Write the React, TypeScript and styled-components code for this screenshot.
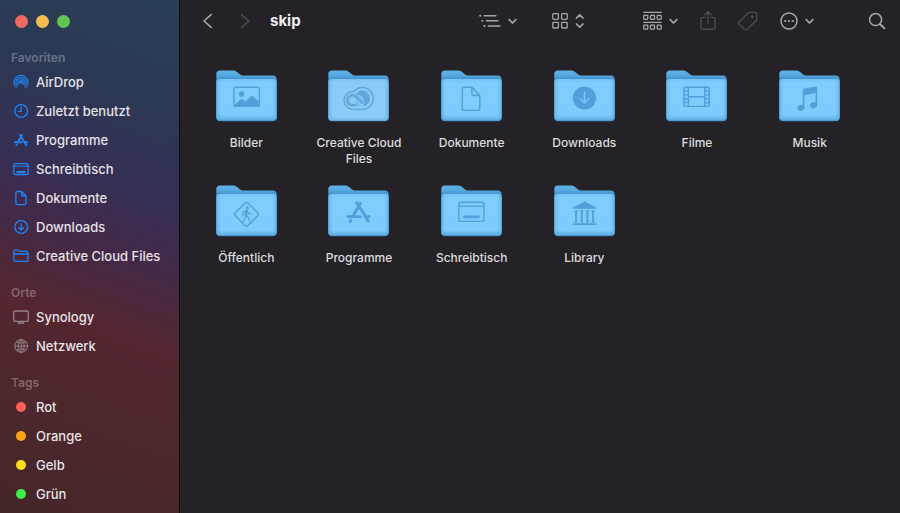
import React from "react";
import styled, { createGlobalStyle } from "styled-components";

const GlobalStyle = createGlobalStyle`
  * { box-sizing: border-box; }
  body { margin: 0; background: #242227; }
  button { border: 0; padding: 0; background: none; color: inherit; font: inherit; }
  svg { display: block; flex: none; }
`;

const Window = styled.div`
  display: flex;
  min-height: 100vh;
  font-family: Inter, "Liberation Sans", sans-serif;
  color: #e4e1e5;
  background: #242227;
`;

const Sidebar = styled.aside`
  flex: none;
  width: 180px;
  border-right: 1px solid #0d0c13;
  background: linear-gradient(
    200deg,
    #283f55 0%,
    #2c3854 20%,
    #352f54 36%,
    #412a4a 46%,
    #54262f 62%,
    #4e272c 74%,
    #432729 100%
  );
`;

const TrafficLights = styled.div`
  display: flex;
  gap: 8px;
  padding: 15px 15px 19px;
`;

const Light = styled.button<{ $color: string }>`
  width: 13px;
  height: 13px;
  border-radius: 50%;
  background: ${(p) => p.$color};
`;

const Section = styled.section`
  margin-bottom: 12px;

  &:last-child {
    margin-bottom: 0;
  }
`;

const SectionTitle = styled.h2`
  margin: 0;
  padding: 2px 0 0 11px;
  font-size: 12px;
  line-height: 18px;
  font-weight: 600;
  color: rgba(255, 255, 255, 0.3);
`;

const List = styled.ul`
  margin: 0;
  padding: 0;
  list-style: none;
`;

const SidebarLink = styled.a<{ $muted?: boolean }>`
  display: flex;
  align-items: center;
  gap: 7px;
  height: 29px;
  padding-left: 13px;
  font-size: 13px;
  line-height: 18px;
  font-weight: 500;
  white-space: nowrap;
  color: #e6e2e8;
  text-decoration: none;

  svg {
    color: ${(p) => (p.$muted ? "#958385" : "#1f83f5")};
  }
`;

const TagSlot = styled.span`
  display: flex;
  justify-content: center;
  width: 16px;
`;

const TagDot = styled.span<{ $color: string }>`
  width: 10px;
  height: 10px;
  border-radius: 50%;
  background: ${(p) => p.$color};
`;

const Main = styled.main`
  flex: 1;
  min-width: 0;
`;

const Toolbar = styled.header`
  display: flex;
  align-items: center;
  height: 42px;
  padding: 0 14px 0 20px;
`;

const ToolButton = styled.button<{ $before?: number; $dim?: boolean }>`
  display: flex;
  align-items: center;
  gap: 7px;
  margin-left: ${(p) => p.$before ?? 0}px;
  color: ${(p) => (p.$dim ? "#4c4a50" : "#a7a5aa")};
`;

const Title = styled.h1`
  flex: 1;
  margin: 0 0 0 18px;
  font-size: 15px;
  line-height: 20px;
  font-weight: 700;
  color: #f2f0f3;
`;

const FolderGrid = styled.div`
  display: grid;
  grid-template-columns: repeat(auto-fill, minmax(110px, 1fr));
  row-gap: 18px;
  padding: 28px 34px 20px 10px;
`;

const FolderItem = styled.button`
  display: flex;
  flex-direction: column;
  align-items: center;
  justify-content: flex-start;
  gap: 12px;
`;

const FolderName = styled.span`
  max-width: 100px;
  font-size: 12px;
  line-height: 16px;
  font-weight: 500;
  color: #dddbde;
`;

const line = {
  fill: "none",
  stroke: "currentColor",
  strokeLinecap: "round" as const,
  strokeLinejoin: "round" as const,
};

const Icon16 = ({ children, w = 1.3 }: { children: React.ReactNode; w?: number }) => (
  <svg width="16" height="16" viewBox="0 0 16 16" {...line} strokeWidth={w} aria-hidden="true">
    {children}
  </svg>
);

const AirDropIcon = () => (
  <Icon16 w={1.1}>
    <path d="M3.3 13.4a7 7 0 1 1 9.4 0" />
    <path d="M4.5 11.8a5.1 5.1 0 1 1 7 0" />
    <path d="M5.7 10.4a3.3 3.3 0 1 1 4.6 0" />
    <path d="M6.9 9.2a1.6 1.6 0 1 1 2.2 0" />
    <circle cx="8" cy="8.1" r=".5" fill="currentColor" />
  </Icon16>
);
const ClockIcon = () => (
  <Icon16>
    <circle cx="8.2" cy="8" r="6.4" />
    <path d="M8.2 3.8V8.3H5" />
  </Icon16>
);
const AppsIcon = () => (
  <Icon16 w={1.9}>
    <path d="M8.9 3.2 5 9.9M7.2 2.8l.9 1.5M9.2 6.2l4 7.2M1.9 10.3h6.9M12.1 10.3h2.2M3.7 12.7l-.4.6" />
  </Icon16>
);
const DesktopIcon = () => (
  <Icon16>
    <rect x=".8" y="2.7" width="14.4" height="10.8" rx="1.6" />
    <path d="M1 5.2h14" strokeWidth="1" />
    <path d="M3.5 11h9" strokeWidth="2" strokeLinecap="butt" />
  </Icon16>
);
const DocumentIcon = () => (
  <Icon16>
    <path d="M4.4 1.5h4.3l4.3 4.4v7.2a1.5 1.5 0 0 1-1.5 1.5H4.4a1.5 1.5 0 0 1-1.5-1.5V3a1.5 1.5 0 0 1 1.5-1.5ZM8.6 1.7v3.1a1.2 1.2 0 0 0 1.2 1.2h3" />
  </Icon16>
);
const DownloadIcon = () => (
  <Icon16>
    <circle cx="8.2" cy="8" r="6.4" />
    <path d="M8.2 4.8v6M5.8 8.7l2.4 2.4 2.4-2.4" />
  </Icon16>
);
const FolderIcon = () => (
  <Icon16>
    <path d="M.8 11.9V3.6c0-.9.6-1.4 1.4-1.4h2.6c1.2 0 1.4 1.2 2.5 1.2h6.3c.9 0 1.4.6 1.4 1.4v7.1c0 .9-.6 1.4-1.4 1.4H2.2c-.9 0-1.4-.6-1.4-1.4ZM.9 6h14" />
  </Icon16>
);
const DisplayIcon = () => (
  <Icon16>
    <rect x=".7" y="2" width="14.6" height="10.3" rx="1.2" />
    <path d="M6.2 12.7v1.2h3.6v-1.2M5.3 14.2h5.4" />
  </Icon16>
);
const GlobeIcon = () => (
  <Icon16 w={1}>
    <circle cx="8.2" cy="8" r="6.4" />
    <ellipse cx="8.2" cy="8" rx="3" ry="6.4" />
    <path d="M8.2 1.6v12.8M1.8 8h12.8M3.5 3.9c2.7 1.6 6.7 1.6 9.4 0M3.5 12.1c2.7-1.6 6.7-1.6 9.4 0" />
  </Icon16>
);

const ChevronDown = () => (
  <svg width="9" height="16" viewBox="0 0 9 16" {...line} strokeWidth="1.7" aria-hidden="true">
    <path d="M1.2 6.6 4.5 10l3.3-3.4" />
  </svg>
);
const UpDown = () => (
  <svg width="9" height="18" viewBox="0 0 9 18" {...line} strokeWidth="1.7" aria-hidden="true">
    <path d="M1.4 6 4.7 2.9 8 6M1.4 12l3.3 3.1L8 12" />
  </svg>
);
const Chevron = ({ right }: { right?: boolean }) => (
  <svg width="14" height="18" viewBox="0 0 14 18" {...line} strokeWidth="1.6" aria-hidden="true">
    <path d={right ? "m3.6 2.6 7.2 6.4-7.2 6.4" : "M11.2 2.6 4 9l7.2 6.4"} />
  </svg>
);
const OutlineIcon = () => (
  <svg width="22" height="16" viewBox="0 0 22 16" {...line} strokeWidth="1.5" aria-hidden="true">
    <path d="M5.2 2.7h11.6M7.400 7.8H19M9.400 12.900h11.500" />
    <path d="M1.2 2.7h.1M3.3 7.8h.1M5.4 12.900h.1" strokeWidth="2" />
  </svg>
);
const GridIcon = () => (
  <svg width="16" height="18" viewBox="0 0 16 18" {...line} strokeWidth="1.3" aria-hidden="true">
    <rect x=".8" y="1.7" width="5.6" height="5.6" rx=".8" />
    <rect x="9.6" y="1.7" width="5.6" height="5.6" rx=".8" />
    <rect x=".8" y="10.4" width="5.6" height="5.6" rx=".8" />
    <rect x="9.6" y="10.4" width="5.6" height="5.6" rx=".8" />
  </svg>
);
const GroupIcon = () => (
  <svg width="19" height="20" viewBox="0 0 19 20" {...line} strokeWidth="1.3" aria-hidden="true">
    <path d="M.8 1.4h17.4M.8 11.3h17.4" />
    {[4.3, 14.1].map((y) =>
      [0.8, 7.5, 14.2].map((x) => <rect key={`${x}-${y}`} x={x} y={y} width="4" height="4" rx=".7" />)
    )}
  </svg>
);
const ShareIcon = () => (
  <svg width="16" height="22" viewBox="0 0 16 22" {...line} strokeWidth="1.4" aria-hidden="true">
    <path d="M5 7.400H2.500A1.600 1.600 0 0 0 .9 9v8.600a1.600 1.600 0 0 0 1.600 1.600h11a1.600 1.600 0 0 0 1.600-1.600V9a1.600 1.600 0 0 0-1.600-1.600H11M8 13V1.800M4.800 4.800 8 1.600l3.200 3.200" />
  </svg>
);
const TagIcon = () => (
  <svg width="20" height="20" viewBox="0 0 20 20" {...line} strokeWidth="1.4" aria-hidden="true">
    <path d="M1.1 11.4 10 2a2 2 0 0 1 1.4-.6l4.1-.3c1.9 0 3.3 1.4 3.3 3.2v3.8c0 .6-.2 1-.6 1.4l-9 9c-.8.8-1.5.8-2.3 0l-5.8-5.3c-.6-.6-.6-1.2 0-1.8Z" />
    <circle cx="14.4" cy="5.8" r=".8" fill="currentColor" />
  </svg>
);
const MoreIcon = () => (
  <svg width="18" height="18" viewBox="0 0 18 18" {...line} strokeWidth="1.5" aria-hidden="true">
    <circle cx="9" cy="9" r="8" />
    <path d="M5.2 9h.1M8.95 9h.1M12.7 9h.1" strokeWidth="2.2" />
  </svg>
);
const SearchIcon = () => (
  <svg width="18" height="18" viewBox="0 0 18 18" {...line} strokeWidth="1.5" aria-hidden="true">
    <circle cx="7.6" cy="7.6" r="6" />
    <path d="m12.2 12.2 4.2 4.2" strokeWidth="2" />
  </svg>
);

const FolderArt = ({ pale, children }: { pale?: boolean; children: React.ReactNode }) => (
  <svg width="61" height="53" viewBox="0 0 61 53" color={pale ? "#62a7dc" : "#539edb"} aria-hidden="true">
    <defs>
      <linearGradient id="folder-back" x1="0" y1="0" x2="0" y2="1">
        <stop offset="0" stopColor="#5fb3e6" />
        <stop offset=".1" stopColor="#54a8df" />
        <stop offset=".2" stopColor="#3f86c4" />
        <stop offset="1" stopColor="#3c87c5" />
      </linearGradient>
      <linearGradient id="folder-front" x1="0" y1="0" x2="0" y2="1">
        <stop offset="0" stopColor="#74c4f7" />
        <stop offset=".1" stopColor="#7ecdfc" />
        <stop offset=".86" stopColor="#7dccfb" />
        <stop offset=".96" stopColor="#64b5e9" />
        <stop offset="1" stopColor="#4d9fd9" />
      </linearGradient>
      <linearGradient id="folder-pale" x1="0" y1="0" x2="0" y2="1">
        <stop offset="0" stopColor="#7fc3f3" />
        <stop offset=".1" stopColor="#8accf7" />
        <stop offset=".9" stopColor="#8accf7" />
        <stop offset="1" stopColor="#72b6e6" />
      </linearGradient>
      <linearGradient id="folder-sides" x1="0" y1="0" x2="1" y2="0">
        <stop offset="0" stopColor="#4a9fdd" stopOpacity=".5" />
        <stop offset=".07" stopColor="#4a9fdd" stopOpacity="0" />
        <stop offset=".93" stopColor="#4a9fdd" stopOpacity="0" />
        <stop offset="1" stopColor="#4a9fdd" stopOpacity=".5" />
      </linearGradient>
    </defs>
    <path
      d="M.3 47V4C.3 1.800 1.700.500 3.900.500h12.600c1.800 0 3 .3 4.300 1.300l3.400 2.600c1 .8 1.900 1.100 3.300 1.100h29.300c2.300 0 3.900 1.500 3.900 3.800V47c0 2.800-1.500 4.300-4.300 4.300H4.600C1.800 51.300.3 49.800.3 47Z"
      fill="url(#folder-back)"
    />
    <rect x=".4" y="9" width="60.200" height="41.700" rx="3.300" fill={pale ? "url(#folder-pale)" : "url(#folder-front)"} />
    <rect x=".4" y="9" width="60.200" height="41.700" rx="3.300" fill="url(#folder-sides)" />
    {children}
  </svg>
);

const PictureGlyph = () => (
  <g>
    <rect x="17.800" y="17.200" width="25.600" height="19.200" rx="2" {...line} strokeWidth="1.400" />
    <circle cx="25.600" cy="24" r="2.700" fill="currentColor" />
    <path d="m18.300 35 6.400-5.400c.6-.5 1.200-.5 1.800 0l2.600 2.200 6.200-5.500c.6-.5 1.200-.5 1.800 0l6 5.700V36H18.300Z" fill="currentColor" />
  </g>
);
const CloudGlyph = () => (
  <g {...line}>
    <path d="M24.500 39.400h9.800a11 11 0 1 0-8.600-18A9 9 0 0 0 24.500 39.400Z" strokeWidth="1.500" />
    <circle cx="34.300" cy="28.400" r="7.800" fill="currentColor" stroke="none" />
    <path d="m26.500 26.500 7.300 7" stroke="#8accf7" strokeWidth="5.200" />
    <path d="M27.700 35.300h-3.200a5 5 0 1 1 3.300-8.600l6.400 6.400" strokeWidth="2.500" />
    <path d="m31 25.200 4.500 4.300" stroke="#8accf7" strokeWidth="1.400" />
  </g>
);
const DocGlyph = () => (
  <path
    d="M23.300 17.200H31l7.800 8.300v12.900a2 2 0 0 1-2 2H23.300a2 2 0 0 1-2-2V19.200a2 2 0 0 1 2-2ZM30.800 17.400v6.100a2 2 0 0 0 2 2h5.900"
    {...line}
    strokeWidth="1.400"
  />
);
const DownGlyph = () => (
  <g>
    <circle cx="30.500" cy="28" r="11.600" fill="currentColor" />
    <path d="M30.500 22.500v10.200M26.300 28.800l4.200 4.200 4.200-4.200" {...line} stroke="#7cc9fa" strokeWidth="1.500" />
  </g>
);
const FilmGlyph = () => (
  <g {...line} strokeWidth="1.400">
    <rect x="18" y="17.200" width="25.200" height="19.200" rx="1.500" />
    <path d="M22.400 17.200v19.200M38.800 17.200v19.200M22.400 26.800h16.400M18 21h4.400M18 24.900h4.400M18 28.700h4.400M18 32.500h4.400M38.800 21h4.400M38.800 24.900h4.400M38.800 28.700h4.400M38.800 32.500h4.400" />
  </g>
);
const MusicGlyph = () => (
  <g fill="currentColor">
    <path d="M23.800 20.400c0-1 .5-1.600 1.400-1.800l11.700-2.200c.8-.1 1.300.2 1.300 1v18.200h-1.600V23l-11.200 2.200v13.200h-1.600Z" />
    <ellipse cx="21.900" cy="37.900" rx="3.500" ry="3" transform="rotate(-20 21.900 37.900)" />
    <ellipse cx="34.600" cy="35.200" rx="3.600" ry="3" transform="rotate(-20 34.600 35.200)" />
  </g>
);
const WalkGlyph = () => (
  <g {...line}>
    <rect x="21.500" y="20.300" width="18" height="18" rx="2.200" transform="rotate(45 30.500 29.300)" strokeWidth="1.400" />
    <circle cx="31.300" cy="22.900" r="1.600" fill="currentColor" stroke="none" />
    <path d="m30.500 26-.6 4.800" strokeWidth="2.600" />
    <path d="m30 25.600-2.800 1.700-.5 3M31.300 26l1.500 2.600 2.300.7M29.900 31l-.8 2.500-2.200 3M30.600 31l2.300 2.100.7 3.400" strokeWidth="1.200" />
  </g>
);
const AppsGlyph = () => (
  <path
    d="M32.500 18.200 25 31M28.600 17.800l2 3.400M32.500 23.300l7.700 13M19.700 31.600h12.600M37.600 31.600h3.700M23 35l-.9 1.500"
    {...line}
    strokeWidth="2.900"
  />
);
const DesktopGlyph = () => (
  <g {...line} strokeWidth="1.400">
    <rect x="17.800" y="17.200" width="25.200" height="19.200" rx="2.200" />
    <path d="M17.800 21.100H43" />
    <rect x="22.300" y="30.600" width="16.200" height="2.600" rx=".6" fill="currentColor" stroke="none" />
  </g>
);
const LibraryGlyph = () => (
  <g fill="currentColor">
    <path d="m30.700 16.600 11.200 5.600c.9.500.6 1.600-.4 1.600H19.900c-1 0-1.300-1.100-.4-1.600Z" />
    {[21, 26.700, 32.400, 38.100].map((x) => (
      <path key={x} d={`M${x - 0.4} 25.200h3v1.300h-.6v9.600h.6v1.300h-3v-1.300h.5v-9.600h-.5Z`} />
    ))}
    <rect x="18.700" y="38.300" width="24" height="1.700" rx=".5" />
  </g>
);

const favourites = [
  { name: "AirDrop", Icon: AirDropIcon },
  { name: "Zuletzt benutzt", Icon: ClockIcon },
  { name: "Programme", Icon: AppsIcon },
  { name: "Schreibtisch", Icon: DesktopIcon },
  { name: "Dokumente", Icon: DocumentIcon },
  { name: "Downloads", Icon: DownloadIcon },
  { name: "Creative Cloud Files", Icon: FolderIcon },
];
const places = [
  { name: "Synology", Icon: DisplayIcon },
  { name: "Netzwerk", Icon: GlobeIcon },
];
const tags = [
  { name: "Rot", color: "#ff5f57" },
  { name: "Orange", color: "#ffa215" },
  { name: "Gelb", color: "#ffe01b" },
  { name: "Grün", color: "#3fee48" },
];
const folders = [
  { name: "Bilder", Glyph: PictureGlyph },
  { name: "Creative Cloud Files", Glyph: CloudGlyph, pale: true },
  { name: "Dokumente", Glyph: DocGlyph },
  { name: "Downloads", Glyph: DownGlyph },
  { name: "Filme", Glyph: FilmGlyph },
  { name: "Musik", Glyph: MusicGlyph },
  { name: "Öffentlich", Glyph: WalkGlyph },
  { name: "Programme", Glyph: AppsGlyph },
  { name: "Schreibtisch", Glyph: DesktopGlyph },
  { name: "Library", Glyph: LibraryGlyph },
];

export default function App() {
  return (
    <>
      <GlobalStyle />
      <Window>
        <Sidebar>
          <TrafficLights>
            <Light $color="#ee6a5f" aria-label="Schließen" />
            <Light $color="#f5bd4f" aria-label="Minimieren" />
            <Light $color="#61c554" aria-label="Vollbild" />
          </TrafficLights>
          <Section>
            <SectionTitle>Favoriten</SectionTitle>
            <List>
              {favourites.map(({ name, Icon }) => (
                <li key={name}>
                  <SidebarLink href="#">
                    <Icon />
                    {name}
                  </SidebarLink>
                </li>
              ))}
            </List>
          </Section>
          <Section>
            <SectionTitle>Orte</SectionTitle>
            <List>
              {places.map(({ name, Icon }) => (
                <li key={name}>
                  <SidebarLink href="#" $muted>
                    <Icon />
                    {name}
                  </SidebarLink>
                </li>
              ))}
            </List>
          </Section>
          <Section>
            <SectionTitle>Tags</SectionTitle>
            <List>
              {tags.map(({ name, color }) => (
                <li key={name}>
                  <SidebarLink href="#">
                    <TagSlot>
                      <TagDot $color={color} />
                    </TagSlot>
                    {name}
                  </SidebarLink>
                </li>
              ))}
            </List>
          </Section>
        </Sidebar>
        <Main>
          <Toolbar>
            <ToolButton aria-label="Zurück">
              <Chevron />
            </ToolButton>
            <ToolButton $before={24} $dim aria-label="Vorwärts">
              <Chevron right />
            </ToolButton>
            <Title>skip</Title>
            <ToolButton aria-label="Gliederung">
              <OutlineIcon />
              <ChevronDown />
            </ToolButton>
            <ToolButton $before={35} aria-label="Darstellung">
              <GridIcon />
              <UpDown />
            </ToolButton>
            <ToolButton $before={59} aria-label="Gruppieren">
              <GroupIcon />
              <ChevronDown />
            </ToolButton>
            <ToolButton $before={22} $dim aria-label="Teilen">
              <ShareIcon />
            </ToolButton>
            <ToolButton $before={22} $dim aria-label="Tags bearbeiten">
              <TagIcon />
            </ToolButton>
            <ToolButton $before={22} aria-label="Aktionen">
              <MoreIcon />
              <ChevronDown />
            </ToolButton>
            <ToolButton $before={54} aria-label="Suchen">
              <SearchIcon />
            </ToolButton>
          </Toolbar>
          <FolderGrid>
            {folders.map(({ name, Glyph, pale }) => (
              <FolderItem key={name}>
                <FolderArt pale={pale}>
                  <Glyph />
                </FolderArt>
                <FolderName>{name}</FolderName>
              </FolderItem>
            ))}
          </FolderGrid>
        </Main>
      </Window>
    </>
  );
}
